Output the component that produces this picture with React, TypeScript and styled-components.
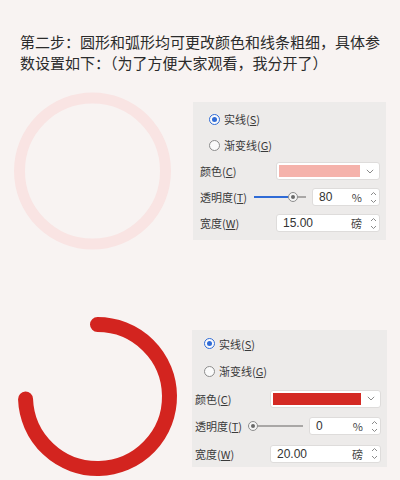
import React from 'react';
import styled, { createGlobalStyle } from 'styled-components';

const GlobalStyle = createGlobalStyle`
  html, body {
    margin: 0;
    padding: 0;
    background: #f8f3f2;
  }
  body {
    font-family: "Noto Sans CJK SC", "Noto Sans", sans-serif;
    color: #2d2d2d;
  }
`;

const Page = styled.div`
  width: 400px;
  height: 480px;
  overflow: hidden;
  background: #f8f3f2;
`;

const Heading = styled.p`
  margin: 0;
  padding: 31px 15px 0 20px;
  font-size: 15px;
  line-height: 21px;
  color: #2b2b2b;
`;

const Section = styled.section<{ $top: number }>`
  display: flex;
  align-items: flex-start;
  margin-top: ${({ $top }) => $top}px;
`;

const Figure = styled.svg`
  flex: none;
  display: block;
`;

type PanelSpec = {
  top: number;
  left: number;
  width: number;
  height: number;
  padTop: number;
  padLeft: number;
  rowH: number;
  labelW: number;
  opacityLabelW: number;
  numW: number;
};

const Panel = styled.div<{ $s: PanelSpec }>`
  box-sizing: border-box;
  flex: none;
  margin-top: ${({ $s }) => $s.top}px;
  margin-left: ${({ $s }) => $s.left}px;
  width: ${({ $s }) => $s.width}px;
  height: ${({ $s }) => $s.height}px;
  padding: ${({ $s }) => `${$s.padTop}px 6px 0 ${$s.padLeft}px`};
  background: #edebea;
  display: grid;
  grid-auto-rows: ${({ $s }) => $s.rowH}px;
  font-size: 11px;
  color: #3a3a3a;
`;

const RadioRow = styled.label`
  display: flex;
  align-items: center;
  gap: 4px;
  padding-left: 9px;
`;

const Radio = styled.span<{ $on: boolean }>`
  box-sizing: border-box;
  width: 11px;
  height: 11px;
  border-radius: 50%;
  border: 1px solid ${({ $on }) => ($on ? '#2f6bd6' : '#8c8c8c')};
  background: #fafafa;
  display: flex;
  align-items: center;
  justify-content: center;

  &::after {
    content: '';
    width: 5px;
    height: 5px;
    border-radius: 50%;
    background: ${({ $on }) => ($on ? '#2f6bd6' : 'transparent')};
  }
`;

const Key = styled.span`
  text-decoration: underline;
  text-underline-offset: 1px;
`;

const FieldRow = styled.div`
  display: flex;
  align-items: center;
`;

const Label = styled.span<{ $w: number }>`
  flex: none;
  width: ${({ $w }) => $w}px;
  white-space: nowrap;
`;

const Box = styled.div<{ $w?: number }>`
  box-sizing: border-box;
  height: 18px;
  ${({ $w }) => ($w ? `width: ${$w}px; flex: none;` : 'flex: 1;')}
  background: #ffffff;
  border: 1px solid #dedcdb;
  border-radius: 3px;
  display: flex;
  align-items: center;
  font-family: "Liberation Sans", "Noto Sans CJK SC", sans-serif;
  font-size: 12px;
  color: #333;
`;

const Swatch = styled.span<{ $c: string }>`
  align-self: stretch;
  margin: 2px 0 2px 2px;
  flex: 1;
  background: ${({ $c }) => $c};
`;

const Caret = styled.span`
  flex: none;
  width: 19px;
  display: flex;
  justify-content: center;
  align-items: center;
`;

const Value = styled.span`
  flex: 1;
  padding-left: 6px;
`;

const Unit = styled.span`
  flex: none;
  font-family: "Noto Sans CJK SC", sans-serif;
  font-size: 11px;
  color: #444;
  margin-right: 5px;
`;

const Spin = styled.span`
  flex: none;
  width: 12px;
  display: flex;
  justify-content: center;
`;

const Track = styled.div`
  position: relative;
  flex: 1;
  height: 10px;
  margin-right: 6px;
`;

const Line = styled.div`
  position: absolute;
  left: 0;
  right: 0;
  top: 4px;
  height: 2px;
  background: #a9a7a6;
`;

const Fill = styled.div`
  position: absolute;
  left: 0;
  top: 4px;
  height: 2px;
  background: #2f6bd6;
`;

const Thumb = styled.div`
  box-sizing: border-box;
  position: absolute;
  top: 0;
  width: 10px;
  height: 10px;
  border-radius: 50%;
  border: 1px solid #8e8e8e;
  background: #f5f5f5;
  display: flex;
  align-items: center;
  justify-content: center;

  &::after {
    content: '';
    width: 4px;
    height: 4px;
    border-radius: 50%;
    background: #6a6a6a;
  }
`;

const ChevronDown = () => (
  <svg width="8" height="5" viewBox="0 0 8 5">
    <path d="M0.8 0.8 L4 4 L7.2 0.8" fill="none" stroke="#8a8a8a" strokeWidth="1" />
  </svg>
);

const Spinner = () => (
  <svg width="7" height="13" viewBox="0 0 7 13">
    <path d="M1 4 L3.5 1.5 L6 4" fill="none" stroke="#8a8a8a" strokeWidth="1" />
    <path d="M1 9 L3.5 11.5 L6 9" fill="none" stroke="#8a8a8a" strokeWidth="1" />
  </svg>
);

type Settings = {
  color: string;
  opacity: number;
  width: string;
};

function LineSettings({ spec, settings }: { spec: PanelSpec; settings: Settings }) {
  const pct = settings.opacity;
  const thumbLeft = `calc(${pct}% - ${(pct / 100) * 10}px)`;
  return (
    <Panel $s={spec}>
      <RadioRow>
        <Radio $on />
        <span>
          实线(<Key>S</Key>)
        </span>
      </RadioRow>
      <RadioRow>
        <Radio $on={false} />
        <span>
          渐变线(<Key>G</Key>)
        </span>
      </RadioRow>
      <FieldRow>
        <Label $w={spec.labelW}>
          颜色(<Key>C</Key>)
        </Label>
        <Box>
          <Swatch $c={settings.color} />
          <Caret>
            <ChevronDown />
          </Caret>
        </Box>
      </FieldRow>
      <FieldRow>
        <Label $w={spec.opacityLabelW}>
          透明度(<Key>T</Key>)
        </Label>
        <Track>
          <Line />
          <Fill style={{ width: thumbLeft }} />
          <Thumb style={{ left: thumbLeft }} />
        </Track>
        <Box $w={spec.numW}>
          <Value>{settings.opacity}</Value>
          <Unit>%</Unit>
          <Spin>
            <Spinner />
          </Spin>
        </Box>
      </FieldRow>
      <FieldRow>
        <Label $w={spec.labelW}>
          宽度(<Key>W</Key>)
        </Label>
        <Box>
          <Value>{settings.width}</Value>
          <Unit>磅</Unit>
          <Spin>
            <Spinner />
          </Spin>
        </Box>
      </FieldRow>
    </Panel>
  );
}

const topPanel: PanelSpec = {
  top: 14,
  left: 7,
  width: 193,
  height: 138,
  padTop: 4,
  padLeft: 7,
  rowH: 26,
  labelW: 76,
  opacityLabelW: 54,
  numW: 68,
};

const bottomPanel: PanelSpec = {
  top: 20,
  left: 6,
  width: 195,
  height: 137,
  padTop: 0,
  padLeft: 3,
  rowH: 27.5,
  labelW: 75,
  opacityLabelW: 53,
  numW: 72,
};

// arc from 12 o'clock, clockwise round to just past 9 o'clock
const arcPath = (() => {
  const cx = 97.5;
  const cy = 86.5;
  const r = 72;
  const a0 = (-90 * Math.PI) / 180;
  const a1 = (178 * Math.PI) / 180;
  const x0 = cx + r * Math.cos(a0);
  const y0 = cy + r * Math.sin(a0);
  const x1 = cx + r * Math.cos(a1);
  const y1 = cy + r * Math.sin(a1);
  return `M${x0.toFixed(2)} ${y0.toFixed(2)} A${r} ${r} 0 1 1 ${x1.toFixed(2)} ${y1.toFixed(2)}`;
})();

export default function App() {
  return (
    <Page>
      <GlobalStyle />
      <Heading>
        第二步：圆形和弧形均可更改颜色和线条粗细，具体参数设置如下：（为了方便大家观看，我分开了）
      </Heading>

      <Section $top={15}>
        <Figure width="186" height="166" viewBox="0 0 186 166">
          <circle cx="92.5" cy="83" r="73" fill="none" stroke="#f9e4e3" strokeWidth="11" />
        </Figure>
        <LineSettings spec={topPanel} settings={{ color: '#f5b2ab', opacity: 80, width: '15.00' }} />
      </Section>

      <Section $top={56}>
        <Figure width="186" height="170" viewBox="0 0 186 170">
          <path d={arcPath} fill="none" stroke="#d3241f" strokeWidth="15" strokeLinecap="round" />
        </Figure>
        <LineSettings spec={bottomPanel} settings={{ color: '#d42a24', opacity: 0, width: '20.00' }} />
      </Section>
    </Page>
  );
}
